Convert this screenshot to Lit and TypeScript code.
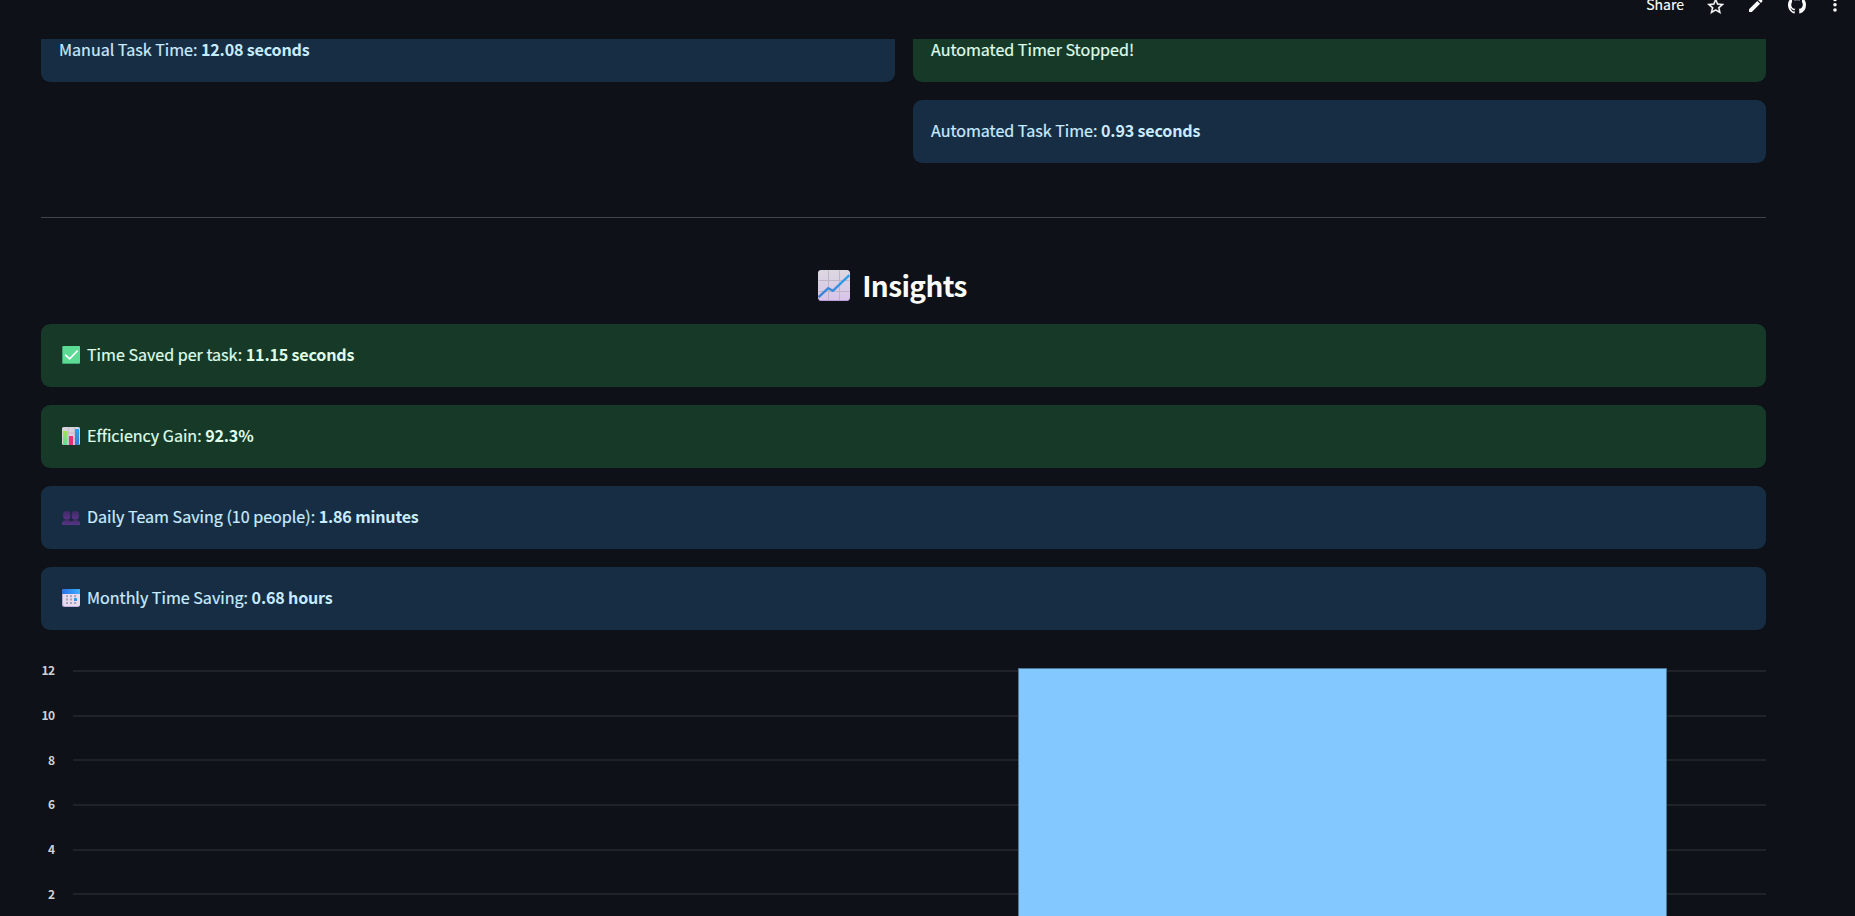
import { LitElement, html, css, svg } from "lit";
import { customElement, property } from "lit/decorators.js";

const icons: Record<string, unknown> = {
  trend: svg`
    <defs>
      <linearGradient id="tb" x1="0" y1="0" x2="0" y2="1"><stop offset="0" stop-color="#dcd8e0"/><stop offset="1" stop-color="#d8c4ea"/></linearGradient>
      <linearGradient id="tl" x1="0" y1="1" x2="1" y2="0"><stop offset="0" stop-color="#3f7fd4"/><stop offset="1" stop-color="#2fa2e8"/></linearGradient>
    </defs>
    <rect width="32" height="31" rx="3.6" fill="#b58fd0"/>
    <rect width="32" height="30.2" rx="3.6" fill="url(#tb)"/>
    <path d="M10.5 .5V30M21.5 .5V30M.5 10.5H31.5M.5 21.5H31.5" stroke="#bdb5c6" stroke-width="1"/>
    <path d="M.6 27.2L10.3 18.2L14.8 20.8L31.4 5.2" fill="none" stroke="url(#tl)" stroke-width="2.4" stroke-linejoin="round"/>`,
  check: svg`
    <rect width="18" height="18" rx="1" fill="#3fa873"/>
    <rect x="1" width="17" height="17" rx="1" fill="#5bdb93"/>
    <path d="M3.6 9.2L7.6 12.8L15.2 5" fill="none" stroke="#fff" stroke-width="1.7" stroke-linecap="round" stroke-linejoin="round"/>`,
  bars: svg`
    <defs><linearGradient id="g1" x1="0" y1="0" x2="0" y2="1"><stop offset="0" stop-color="#a5e04a"/><stop offset="1" stop-color="#62d99b"/></linearGradient>
    <linearGradient id="g2" x1="0" y1="0" x2="0" y2="1"><stop offset="0" stop-color="#2ba0f2"/><stop offset="1" stop-color="#3a7cd0"/></linearGradient></defs>
    <rect width="18" height="18" rx="1.5" fill="#d9d2df"/>
    <path d="M6.3 0V18M12.3 0V18M0 6H18M0 12H18" stroke="#b9b0c2" stroke-width=".6"/>
    <path d="M1 4H5.4V18H2Q1 18 1 17Z" fill="url(#g1)"/>
    <rect x="7" y="9" width="4" height="9" fill="#ee2f76"/>
    <path d="M13 2H17V17Q17 18 16 18H13Z" fill="url(#g2)"/>`,
  people: svg`
    <defs><linearGradient id="pg" x1="0" y1="0" x2="0" y2="1"><stop offset="0" stop-color="#3f2b63"/><stop offset="1" stop-color="#5a3489"/></linearGradient></defs>
    <g fill="url(#pg)"><rect x="1.2" y="3" width="7" height="8.6" rx="3"/><rect x="9.8" y="3" width="7" height="8.6" rx="3"/>
    <path d="M0 17V15.2Q0 12.9 3 12.6V11H6.4V12.6Q8.4 12.8 9 13.8Q9.6 12.8 11.6 12.6V11H15V12.6Q18 12.9 18 15.2V17Z"/></g>`,
  calendar: svg`
    <defs><linearGradient id="cg" x1="0" y1="0" x2="1" y2="0"><stop offset="0" stop-color="#2d6fe8"/><stop offset="1" stop-color="#35b1fb"/></linearGradient></defs>
    <rect width="18" height="18" rx="2.2" fill="#b9a3d2"/>
    <rect x="1" width="17" height="17.2" rx="2.2" fill="#e6dcf0"/>
    <path d="M0 5V2Q0 0 2 0H16Q18 0 18 2V5Z" fill="url(#cg)"/>
    <g fill="#aaa2b8"><rect x="4" y="6.2" width="2" height="2"/><rect x="8" y="6.2" width="2" height="2"/><rect x="12" y="6.2" width="2.2" height="2"/>
    <rect x="4" y="9.5" width="2" height="2"/><rect x="8" y="9.5" width="2" height="2"/>
    <rect x="4" y="13" width="2" height="2"/><rect x="8" y="13" width="2" height="2"/><rect x="12" y="13" width="2.2" height="2"/></g>
    <rect x="12" y="9" width="3" height="3" rx=".5" fill="#3294ee"/>`,
};

@customElement("status-alert")
class StatusAlert extends LitElement {
  @property() kind = "info";
  @property() icon = "";
  @property() label = "";
  @property() value = "";
  static styles = css`
    :host { display: block; }
    .box { height: 63px; box-sizing: border-box; padding: 0 18px 3px; border-radius: 9px; display: flex; align-items: center; white-space: pre; }
    .info { background: #172d43; color: #c7ebff; }
    .success { background: #173928; color: #dffde9; }
    .icon { width: 18px; height: 18px; margin: 2px 7px 0 3px; flex: none; }
    .text { letter-spacing: -0.02px; -webkit-text-stroke: 0.2px currentColor; }
    b { font-weight: 700; letter-spacing: -0.18px; -webkit-text-stroke: 0; }
  `;
  render() {
    return html`<div class="box ${this.kind}">
      ${this.icon ? html`<svg class="icon" viewBox="0 0 18 18">${icons[this.icon]}</svg>` : ""}<span class="text">${this.label}${this.value ? html` <b>${this.value}</b>` : ""}</span></div>`;
  }
}

@customElement("time-chart")
class TimeChart extends LitElement {
  static styles = css`
    :host { display: block; }
    svg { display: block; width: 1725px; height: 268px; }
    text { font-size: 12px; font-weight: 700; fill: #cfd0d4; text-anchor: end; letter-spacing: -0.5px; }
    .grid { fill: #1f2229; }
    .bar { fill: #83c9ff; stroke: #4f7796; stroke-width: 1; }
  `;
  render() {
    const ticks = [[12, 23, 27], [10, 68, 72], [8, 112, 117], [6, 157, 161], [4, 202, 206], [2, 246, 251]];
    return html`<svg viewBox="0 0 1725 268">
      ${ticks.map(([n, y, base]) => svg`<text x="13.6" y=${base}>${n}</text><rect class="grid" x="32" y=${y - 1} width="1693" height="2"></rect>`)}
      <rect class="bar" x="977.5" y="20.5" width="648" height="300"></rect>
    </svg>`;
  }
}

@customElement("app-root")
class AppRoot extends LitElement {
  static styles = css`
    :host { display: block; width: 1855px; height: 916px; overflow: hidden; background: #0e1117; color: #fafafa;
      font-family: "Noto Sans CJK SC", "Noto Sans", sans-serif; font-size: 16.1px; line-height: 24px; }
    header { height: 39px; display: flex; justify-content: flex-end; overflow: hidden; }
    .share { font-size: 14px; line-height: 20px; height: 20px; margin: -6px 0 0; color: #fff; -webkit-text-stroke: 0.15px #fff; }
    .tool { display: block; flex: none; width: 171px; height: 20px; }
    main { width: 1725px; height: 877px; margin-left: 41px; overflow: hidden; }
    .cols { display: grid; grid-template-columns: 854px 853px; column-gap: 18px; margin-top: -20px; }
    .stack { display: grid; gap: 18px; align-content: start; }
    hr { border: 0; height: 1px; background: #41444a; margin: 54px 0 0; }
    h2 { margin: 51px 0 22px; height: 33px; display: flex; align-items: center; justify-content: center; font-size: 28px; line-height: 33px; font-weight: 700; padding-right: 22px; letter-spacing: -0.6px; }
    h2 svg { width: 32px; height: 31px; margin-right: 12px; }
    h2 span { padding-bottom: 1px; }
    time-chart { margin-top: 18px; }
  `;
  render() {
    return html`
      <header>
        <span class="share">Share</span>
        <svg class="tool" viewBox="0 0 171 20" fill="#fafafa">
          <path transform="translate(21.6 -3.8) scale(.84)" stroke="#fafafa" stroke-width=".3" d="M22 9.24l-7.19-.62L12 2 9.19 8.63 2 9.24l5.46 4.73L5.82 21 12 17.27 18.18 21l-1.63-7.03L22 9.24zM12 15.4l-3.76 2.27 1-4.28-3.32-2.88 4.38-.38L12 6.1l1.71 4.04 4.38.38-3.32 2.88 1 4.28L12 15.4z"/>
          <path transform="translate(62.75 -3.75) scale(.75)" d="M3 17.25V21h3.75L17.81 9.94l-3.75-3.75L3 17.25zM20.71 7.04a1 1 0 0 0 0-1.41l-2.34-2.34a1 1 0 0 0-1.41 0l-1.83 1.83 3.75 3.75 1.83-1.83z"/>
          <path transform="translate(104 -4.1) scale(1.125)" d="M8 0C3.58 0 0 3.58 0 8c0 3.54 2.29 6.53 5.47 7.59.4.07.55-.17.55-.38 0-.19-.01-.82-.01-1.49-2.01.37-2.53-.49-2.69-.94-.09-.23-.48-.94-.82-1.13-.28-.15-.68-.52-.01-.53.63-.01 1.08.58 1.23.82.72 1.21 1.87.87 2.33.66.07-.52.28-.87.51-1.07-1.78-.2-3.64-.89-3.64-3.95 0-.87.31-1.59.82-2.15-.08-.2-.36-1.02.08-2.12 0 0 .67-.21 2.2.82.64-.18 1.32-.27 2-.27s1.36.09 2 .27c1.53-1.04 2.2-.82 2.2-.82.44 1.1.16 1.92.08 2.12.51.56.82 1.27.82 2.15 0 3.07-1.87 3.75-3.65 3.95.29.25.54.73.54 1.48 0 1.07-.01 1.93-.01 2.2 0 .21.15.46.55.38A8.01 8.01 0 0 0 16 8c0-4.42-3.58-8-8-8z"/>
          <circle cx="151" cy="-.6" r="1.8"/><circle cx="151" cy="4.7" r="1.8"/><circle cx="151" cy="10" r="1.8"/>
        </svg>
      </header>
      <main>
        <div class="cols">
          <div class="stack"><status-alert kind="info" label="Manual Task Time:" value="12.08 seconds"></status-alert></div>
          <div class="stack">
            <status-alert kind="success" label="Automated Timer Stopped!"></status-alert>
            <status-alert kind="info" label="Automated Task Time:" value="0.93 seconds"></status-alert>
          </div>
        </div>
        <hr />
        <h2><svg viewBox="0 0 32 31">${icons.trend}</svg><span>Insights</span></h2>
        <div class="stack">
          <status-alert kind="success" icon="check" label="Time Saved per task:" value="11.15 seconds"></status-alert>
          <status-alert kind="success" icon="bars" label="Efficiency Gain:" value="92.3%"></status-alert>
          <status-alert kind="info" icon="people" label="Daily Team Saving (10 people):" value="1.86 minutes"></status-alert>
          <status-alert kind="info" icon="calendar" label="Monthly Time Saving:" value="0.68 hours"></status-alert>
        </div>
        <time-chart></time-chart>
      </main>`;
  }
}
